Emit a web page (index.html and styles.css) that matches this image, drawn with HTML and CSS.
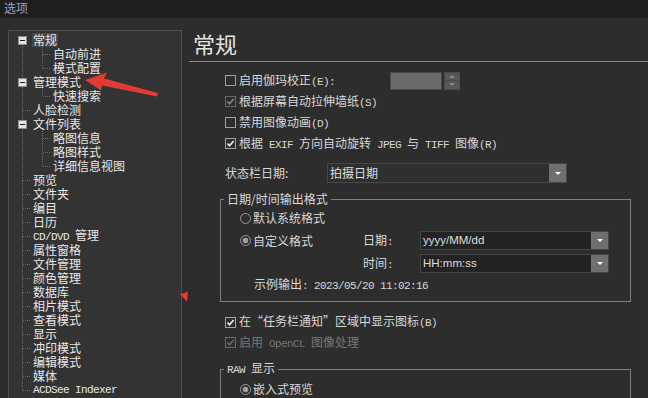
FILE: index.html
```html
<!DOCTYPE html>
<html>
<head>
<meta charset="utf-8">
<title>选项</title>
<link rel="stylesheet" href="styles.css">
</head>
<body>
<div class="titlebar">选项</div>
<div class="main">
  <div class="panel">
    <div class="tree">
      <div class="r exp"><span class="box"></span><span class="sel">常规</span></div>
      <div class="kids">
        <div class="r child"><span>自动前进</span></div>
        <div class="r child"><span>模式配置</span></div>
      </div>
      <div class="r exp"><span class="box"></span><span>管理模式</span></div>
      <div class="kids">
        <div class="r child"><span>快速搜索</span></div>
      </div>
      <div class="r leaf"><span>人脸检测</span></div>
      <div class="r exp"><span class="box"></span><span>文件列表</span></div>
      <div class="kids">
        <div class="r child"><span>略图信息</span></div>
        <div class="r child"><span>略图样式</span></div>
        <div class="r child"><span>详细信息视图</span></div>
      </div>
      <div class="r leaf"><span>预览</span></div>
      <div class="r leaf"><span>文件夹</span></div>
      <div class="r leaf"><span>编目</span></div>
      <div class="r leaf"><span>日历</span></div>
      <div class="r leaf"><span><span class="m">CD/DVD </span>管理</span></div>
      <div class="r leaf"><span>属性窗格</span></div>
      <div class="r leaf"><span>文件管理</span></div>
      <div class="r leaf"><span>颜色管理</span></div>
      <div class="r leaf"><span>数据库</span></div>
      <div class="r leaf"><span>相片模式</span></div>
      <div class="r leaf"><span>查看模式</span></div>
      <div class="r leaf"><span>显示</span></div>
      <div class="r leaf"><span>冲印模式</span></div>
      <div class="r leaf"><span>编辑模式</span></div>
      <div class="r leaf"><span>媒体</span></div>
      <div class="r leaf"><span class="m">ACDSee Indexer</span></div>
    </div>
  </div>

  <div class="content">
    <div class="heading">常规</div>

    <div class="opt first">
      <span class="cb"></span><span>启用伽玛校正<span class="m">(E):</span></span>
      <div class="spin">
        <div class="field"></div>
        <div class="btns"><span class="up"></span><span class="down"></span></div>
      </div>
    </div>
    <div class="opt">
      <span class="cb dis"><svg width="9" height="9" viewBox="0 0 9 9"><path d="M1.5 4.5 L3.5 6.8 L7.6 2" fill="none" stroke="#8a8a8a" stroke-width="1.5"/></svg></span><span>根据屏幕自动拉伸墙纸<span class="m">(S)</span></span>
    </div>
    <div class="opt">
      <span class="cb"></span><span>禁用图像动画<span class="m">(D)</span></span>
    </div>
    <div class="opt">
      <span class="cb"><svg width="9" height="9" viewBox="0 0 9 9"><path d="M1.5 4.5 L3.5 6.8 L7.6 2" fill="none" stroke="#f2f2f2" stroke-width="1.6"/></svg></span><span>根据<span class="m"> EXIF </span>方向自动旋转<span class="m"> JPEG </span>与<span class="m"> TIFF </span>图像<span class="m">(R)</span></span>
    </div>
    <div class="opt status">
      <span class="slab">状态栏日期:</span>
      <div class="dd wide"><span class="val">拍摄日期</span><span class="btn"></span></div>
    </div>

    <fieldset class="grp g1">
      <legend>日期/时间输出格式</legend>
      <div class="fr fr1"><span class="rad"></span><span>默认系统格式</span></div>
      <div class="fr fr2">
        <span class="rg"><span class="rad on"></span><span>自定义格式</span></span>
        <span class="lab">日期<span class="m">:</span></span>
        <div class="dd dark"><span class="val sans">yyyy/MM/dd</span><span class="btn"></span></div>
      </div>
      <div class="fr fr3">
        <span class="lab">时间<span class="m">:</span></span>
        <div class="dd dark"><span class="val sans">HH:mm:ss</span><span class="btn"></span></div>
      </div>
      <div class="fr fr4"><span>示例输出<span class="m">: 2023/05/20 11:02:16</span></span></div>
    </fieldset>

    <div class="opt after">
      <span class="cb"><svg width="9" height="9" viewBox="0 0 9 9"><path d="M1.5 4.5 L3.5 6.8 L7.6 2" fill="none" stroke="#f2f2f2" stroke-width="1.6"/></svg></span><span>在<span class="q ql">“</span>任务栏通知<span class="q qr">”</span>区域中显示图标<span class="m">(B)</span></span>
    </div>
    <div class="opt grey">
      <span class="cb dis"><svg width="9" height="9" viewBox="0 0 9 9"><path d="M1.5 4.5 L3.5 6.8 L7.6 2" fill="none" stroke="#6c6c6c" stroke-width="1.5"/></svg></span><span>启用<span class="m"> OpenCL </span>图像处理</span>
    </div>

    <fieldset class="grp g2">
      <legend><span class="m">RAW </span>显示</legend>
      <div class="fr fr1"><span class="rad on"></span><span>嵌入式预览</span></div>
    </fieldset>
  </div>
</div>

<svg class="marks" width="648" height="398" viewBox="0 0 648 398">
  <polygon points="85,80 107,72.5 104,78.5 158,93 157,96.5 102,85.5 101,90.5" fill="#e23b36"/>
  <polygon points="180,294.5 188,291.5 187,301.5" fill="#e53a35"/>
</svg>
</body>
</html>
```

FILE: styles.css
```css
* { box-sizing: border-box; }
html, body { margin: 0; padding: 0; }
body {
  width: 648px;
  height: 398px;
  overflow: hidden;
  position: relative;
  background: #2d2d2d;
  color: #d8d8d8;
  font-family: "Noto Sans CJK SC", sans-serif;
  font-size: 12px;
  line-height: 14px;
}
.m {
  font-family: "Liberation Mono", monospace;
  font-size: 11px;
  letter-spacing: -0.6px;
  white-space: pre;
}
.sans { font-family: "Liberation Sans", sans-serif; font-size: 11.5px; }

.titlebar {
  height: 18px;
  background: #1e1e1e;
  color: #8fa3c4;
  padding-left: 4px;
  line-height: 16px;
}

.main { display: flex; padding-top: 12px; }

.panel {
  flex: none;
  margin-left: 8px;
  width: 174px;
  height: 380px;
  border: 1px solid #4e4e4e;
  background: #333333;
  overflow: hidden;
}
.tree {
  padding-top: 2px;
  background: repeating-linear-gradient(to bottom, #6c6c6c 0 1px, transparent 1px 2px) 13px 14px / 1px 345px no-repeat;
}
.r {
  display: flex;
  align-items: center;
  height: 14px;
  padding-left: 9px;
  white-space: nowrap;
  color: #e8e8e8;
}
.box {
  flex: none;
  width: 9px;
  height: 9px;
  border: 1px solid #8c8c8c;
  background: #e4e4e4;
  margin-right: 6px;
  display: flex;
  align-items: center;
  justify-content: center;
}
.box::after { content: ""; width: 5px; height: 1px; background: #1c1c1c; }
.r.leaf::before, .r.child::before {
  content: "";
  flex: none;
  width: 8px;
  height: 1px;
  margin-right: 2px;
  background: repeating-linear-gradient(to right, #6c6c6c 0 1px, transparent 1px 2px);
}
.r.leaf::before { margin-left: 5px; }
.r.child::before { margin-left: 25px; }
.kids {
  margin-top: -2px;
  padding-top: 2px;
  background: repeating-linear-gradient(to bottom, #6c6c6c 0 1px, transparent 1px 2px) 33px 0 / 1px calc(100% - 7px) no-repeat;
}
.sel { background: #464646; padding: 0 1px; margin-left: -1px; }

.content { flex: 1; margin-left: 7px; }
.heading {
  font-size: 22px;
  line-height: 22px;
  padding: 2px 0 7px 4px;
  border-bottom: 1px solid #8c8c8c;
  color: #e2e2e2;
}

.opt {
  display: flex;
  align-items: center;
  height: 21px;
  margin-left: 36px;
  white-space: nowrap;
}
.opt.first { margin-top: 8px; }
.opt.status { margin-top: 9px; height: 20px; }
.opt.after { margin-top: 10px; height: 20px; }
.opt.grey { height: 21px; color: #777777; }

.cb {
  flex: none;
  width: 11px;
  height: 11px;
  border: 1px solid #a2a2a2;
  margin-right: 3px;
  display: flex;
  align-items: center;
  justify-content: center;
}
.cb.dis { border-color: #6a6a6a; }
.q { display: inline-block; width: 12px; }
.ql { text-align: right; }
.qr { text-align: left; }

.spin { display: flex; gap: 2px; margin-left: 55px; height: 18px; }
.spin .field { width: 52px; height: 18px; background: #6b6b6b; border: 1px solid #4b4b4b; }
.spin .btns {
  width: 16px;
  display: flex;
  flex-direction: column;
  gap: 1px;
  border: 1px solid #4b4b4b;
  background: #4b4b4b;
}
.spin .btns span {
  flex: 1;
  background: #575757;
  display: flex;
  align-items: center;
  justify-content: center;
}
.spin .up::after {
  content: "";
  border-left: 3px solid transparent;
  border-right: 3px solid transparent;
  border-bottom: 3px solid #8a8a8a;
}
.spin .down::after {
  content: "";
  border-left: 3px solid transparent;
  border-right: 3px solid transparent;
  border-top: 3px solid #8a8a8a;
}

.slab { width: 102px; flex: none; }
.dd {
  display: flex;
  height: 20px;
  border: 1px solid #474747;
  background: #2f2f2f;
  flex: none;
}
.dd.wide { width: 240px; }
.dd .val { flex: 1; padding-left: 2px; line-height: 18px; color: #dedede; }
.dd .btn {
  width: 17px;
  background: #6f6f6f;
  display: flex;
  align-items: center;
  justify-content: center;
}
.dd .btn::after {
  content: "";
  border-left: 3px solid transparent;
  border-right: 3px solid transparent;
  border-top: 3px solid #ffffff;
}
.dd.dark { width: 189px; height: 19px; background: #232323; border-color: #454545; }
.dd.dark .val { line-height: 17px; }

.grp {
  margin: 9px 0 0 31px;
  width: 411px;
  padding: 0 0 7px 0;
  border: 1px solid #7e7e7e;
  min-width: 0;
}
.grp legend {
  padding: 0 3px;
  margin-left: 3px;
  line-height: 14px;
  color: #d8d8d8;
}
.grp.g2 { margin-top: 8px; }

.fr { display: flex; align-items: center; padding-left: 19px; white-space: nowrap; }
.fr1 { margin-top: 2px; height: 20px; }
.fr2 { margin-top: 3px; height: 19px; }
.fr3 { margin-top: 4px; height: 19px; padding-left: 142px; }
.fr4 { margin-top: 3px; height: 18px; padding-left: 33px; }

.rad {
  flex: none;
  width: 11px;
  height: 11px;
  border-radius: 50%;
  border: 1px solid #9a9a9a;
  margin-right: 2px;
}
.rad.on { background: radial-gradient(circle, #a0a0a0 0 2.5px, transparent 3.2px); }
.rg { width: 123px; display: flex; align-items: center; flex: none; }
.lab { width: 57px; flex: none; }

.marks { position: absolute; left: 0; top: 0; pointer-events: none; }
```
